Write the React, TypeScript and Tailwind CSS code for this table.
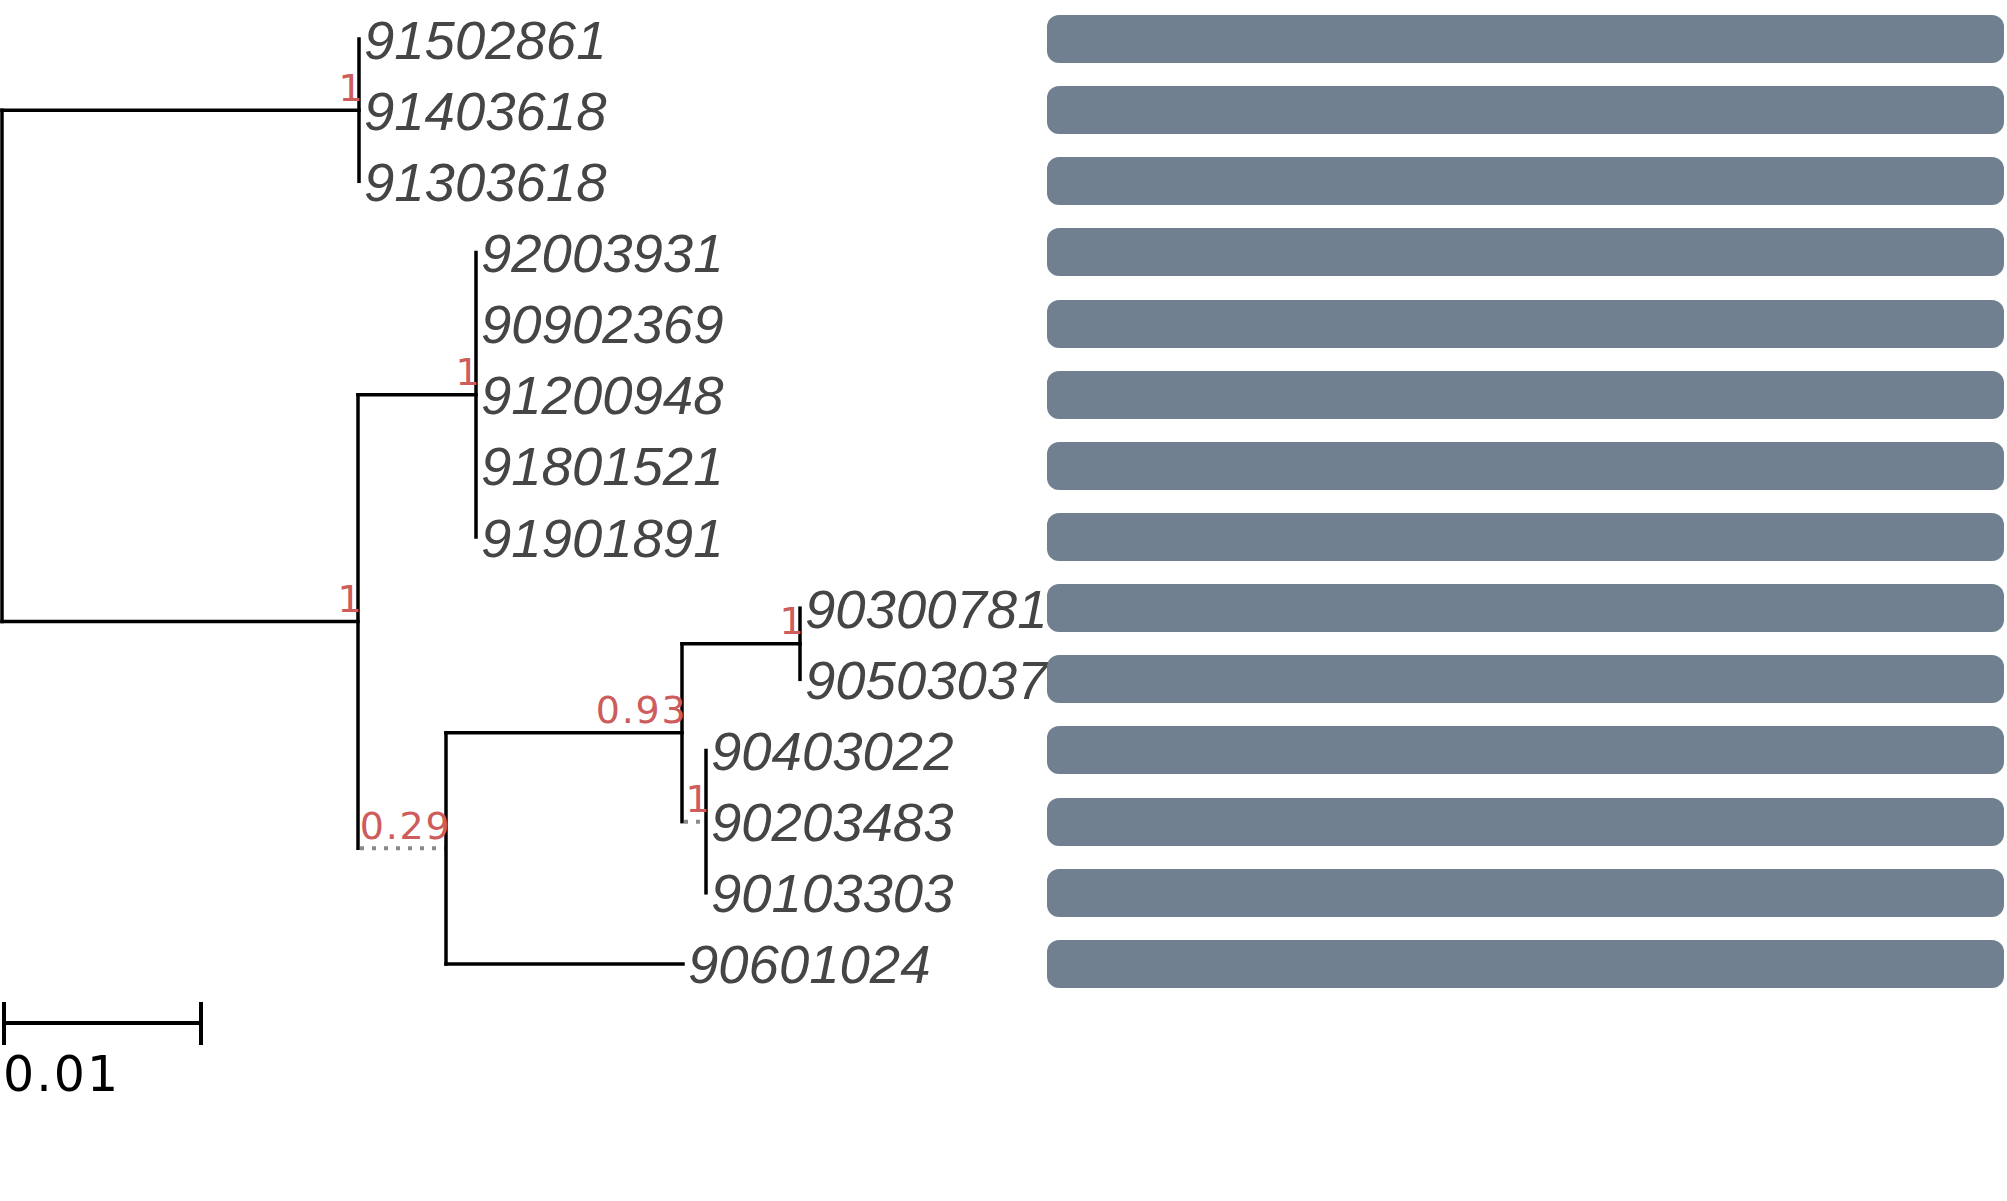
const ROW0 = 39;
const PITCH = 71.15;
const rowY = (i: number) => ROW0 + PITCH * i;

const leaves = [
  { name: '91502861', x: 359 },
  { name: '91403618', x: 359 },
  { name: '91303618', x: 359 },
  { name: '92003931', x: 476 },
  { name: '90902369', x: 476 },
  { name: '91200948', x: 476 },
  { name: '91801521', x: 476 },
  { name: '91901891', x: 476 },
  { name: '90300781', x: 800 },
  { name: '90503037', x: 800 },
  { name: '90403022', x: 706 },
  { name: '90203483', x: 706 },
  { name: '90103303', x: 706 },
  { name: '90601024', x: 683 },
];

// node positions
const yA = rowY(1);
const yB1 = rowY(5);
const yC1 = (rowY(8) + rowY(9)) / 2;
const yC2 = rowY(11);
const yC = (yC1 + yC2) / 2;
const yB2 = (yC + rowY(13)) / 2;
const yB = (yB1 + yB2) / 2;

type Seg = [number, number, number, number];

const solid: Seg[] = [
  // root
  [2, yA, 2, yB],
  [2, yA, 359, yA],
  [2, yB, 358, yB],
  // clade A
  [359, rowY(0), 359, rowY(2)],
  // clade B
  [358, yB1, 358, yB2],
  [358, yB1, 476, yB1],
  [476, rowY(3), 476, rowY(7)],
  // clade B2
  [446, yC, 446, rowY(13)],
  [446, yC, 682, yC],
  [446, rowY(13), 683, rowY(13)],
  // clade C
  [682, yC1, 682, yC2],
  [682, yC1, 800, yC1],
  [800, rowY(8), 800, rowY(9)],
  [706, rowY(10), 706, rowY(12)],
];

const dotted: Seg[] = [
  [360, yB2, 446, yB2],
  [684, yC2, 706, yC2],
];

const support = [
  { x: 359, y: yA, t: '1' },
  { x: 358, y: yB, t: '1' },
  { x: 476, y: yB1, t: '1' },
  { x: 446, y: yB2, t: '0.29' },
  { x: 682, y: yC, t: '0.93' },
  { x: 800, y: yC1, t: '1' },
  { x: 706, y: yC2, t: '1' },
];

function Tree() {
  return (
    <svg width="1047" height="1201" className="shrink-0 overflow-visible">
      {dotted.map(([x1, y1, x2, y2], i) => (
        <line key={'d' + i} x1={x1} y1={y1} x2={x2} y2={y2} stroke="#8a8a8a" strokeWidth={4} strokeDasharray="4 8" />
      ))}
      {solid.map(([x1, y1, x2, y2], i) => (
        <line key={'s' + i} x1={x1} y1={y1} x2={x2} y2={y2} stroke="#000" strokeWidth={3.5} strokeLinecap="square" />
      ))}
      {leaves.map((l, i) => (
        <text
          key={l.name}
          x={l.x + 5}
          y={rowY(i) + 19.5}
          fill="#454545"
          fontSize={54.5}
          fontStyle="italic"
          fontFamily="'Liberation Sans', Arial, sans-serif"
        >
          {l.name}
        </text>
      ))}
      {support.map((s, i) => (
        <text
          key={'n' + i}
          x={s.x + 5.5}
          y={s.y - 9.5}
          fill="#cd5c5c"
          fontSize={38}
          letterSpacing={1.8}
          textAnchor="end"
          fontFamily="'DejaVu Sans', sans-serif"
        >
          {s.t}
        </text>
      ))}
      {/* scale bar */}
      <line x1={4} y1={1023} x2={201} y2={1023} stroke="#000" strokeWidth={4} />
      <line x1={4} y1={1002} x2={4} y2={1045} stroke="#000" strokeWidth={4} />
      <line x1={201} y1={1002} x2={201} y2={1045} stroke="#000" strokeWidth={4} />
      <text x={3} y={1091} fill="#000" fontSize={49} letterSpacing={2} fontFamily="'DejaVu Sans', sans-serif">
        0.01
      </text>
    </svg>
  );
}

export default function App() {
  return (
    <div className="flex w-[2007px] h-[1201px] bg-white overflow-hidden">
      <Tree />
      <div className="flex flex-col gap-[23.15px] pt-[15px] w-[957px]">
        {leaves.map((l) => (
          <div key={l.name} className="h-[48px] rounded-[12px] bg-[#708090]" />
        ))}
      </div>
    </div>
  );
}
